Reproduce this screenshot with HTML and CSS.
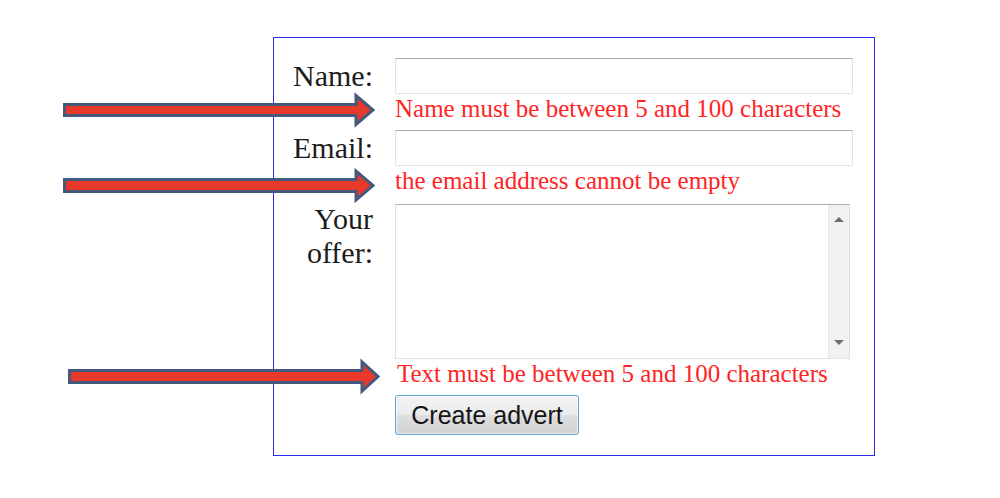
FILE: index.html
```html
<!DOCTYPE html>
<html lang="en">
<head>
<meta charset="utf-8">
<title>Create advert</title>
<link rel="stylesheet" href="styles.css">
</head>
<body>
<div class="page">
  <form class="advert-form">
    <label class="lbl" for="name">Name:</label>
    <div class="field">
      <input class="txt" id="name" type="text">
      <div class="err">Name must be between 5 and 100 characters</div>
    </div>

    <label class="lbl" for="email">Email:</label>
    <div class="field">
      <input class="txt" id="email" type="text">
      <div class="err">the email address cannot be empty</div>
    </div>

    <label class="lbl lbl-multi" for="offer">Your offer:</label>
    <div class="field">
      <div class="area">
        <textarea class="area-input" id="offer"></textarea>
        <div class="scrollbar">
          <span class="sb-up"></span>
          <span class="sb-down"></span>
        </div>
      </div>
      <div class="err err-text">Text must be between 5 and 100 characters</div>
    </div>

    <div class="lbl"></div>
    <div class="field">
      <button class="btn" type="button">Create advert</button>
    </div>
  </form>

  <svg class="arrows" width="1000" height="498" viewBox="0 0 1000 498" aria-hidden="true">
    <polygon class="arrow" points="64.5,104.5 356,104.5 356,95.5 373,110 356,124.5 356,115.5 64.5,115.5"/>
    <polygon class="arrow" points="64.5,179.5 356,179.5 356,171 373,185.5 356,200 356,191.5 64.5,191.5"/>
    <polygon class="arrow" points="69.5,370.5 362,370.5 362,362 378,376.5 362,391 362,382.5 69.5,382.5"/>
  </svg>
</div>
</body>
</html>
```

FILE: styles.css
```css
html, body {
  margin: 0;
  padding: 0;
  background: #ffffff;
}

.page {
  position: relative;
  width: 1000px;
  height: 498px;
  overflow: hidden;
  padding-top: 37px;
  box-sizing: border-box;
}

.advert-form {
  margin-left: 273px;
  border: 1px solid #2b2bf0;
  padding: 20px 21px 20px 0;
  box-sizing: content-box;
  width: 579px;
  display: grid;
  grid-template-columns: 99px 458px;
  column-gap: 22px;
  align-items: start;
  font-family: "Liberation Serif", "Times New Roman", serif;
}

.lbl {
  font-size: 30px;
  line-height: 36px;
  color: #1c1c1c;
  text-align: right;
}

.lbl-multi {
  line-height: 34px;
  margin-top: 0;
}

.field {
  display: flex;
  flex-direction: column;
  align-items: flex-start;
}

.txt {
  display: block;
  width: 458px;
  height: 36px;
  box-sizing: border-box;
  margin: 0;
  border: 1px solid #dde2e8;
  border-top-color: #aaadb3;
  background: #fff;
  font-size: 20px;
  padding: 2px 4px;
  outline: none;
}

.err {
  font-size: 25px;
  line-height: 29px;
  color: #ff2424;
  margin-bottom: 7px;
  white-space: nowrap;
}

.err-text {
  padding-left: 2px;
}

.area {
  display: flex;
  width: 455px;
  height: 155px;
  margin-top: 2px;
  box-sizing: border-box;
  border: 1px solid #dde2e8;
  border-top-color: #aaadb3;
  background: #fff;
}

.area-input {
  flex: 1;
  border: 0;
  margin: 0;
  padding: 2px 4px;
  resize: none;
  outline: none;
  background: transparent;
  font-family: "Liberation Serif", serif;
  font-size: 20px;
}

.scrollbar {
  width: 21px;
  background: #f1f1f1;
  border-left: 1px solid #e6e6e6;
  display: flex;
  flex-direction: column;
  justify-content: space-between;
  align-items: center;
  padding: 12px 0 13px;
  box-sizing: border-box;
}

.sb-up {
  width: 0;
  height: 0;
  border-left: 5px solid transparent;
  border-right: 5px solid transparent;
  border-bottom: 5px solid #6f6f6f;
}

.sb-down {
  width: 0;
  height: 0;
  border-left: 5px solid transparent;
  border-right: 5px solid transparent;
  border-top: 5px solid #6f6f6f;
}

.btn {
  width: 184px;
  height: 40px;
  margin: 0;
  padding: 0;
  border: 1px solid #5fa5d3;
  border-radius: 3px;
  background: linear-gradient(#f4f4f4, #ebebeb 48%, #dedede 52%, #d2d2d2);
  font-family: "Liberation Sans", Arial, sans-serif;
  font-size: 25px;
  color: #141414;
  box-shadow: inset 0 0 0 1px rgba(255, 255, 255, 0.6);
}

.arrows {
  position: absolute;
  top: 0;
  left: 0;
  pointer-events: none;
}

.arrow {
  fill: #e7382a;
  stroke: #45597e;
  stroke-width: 3;
  stroke-linejoin: miter;
}
```
